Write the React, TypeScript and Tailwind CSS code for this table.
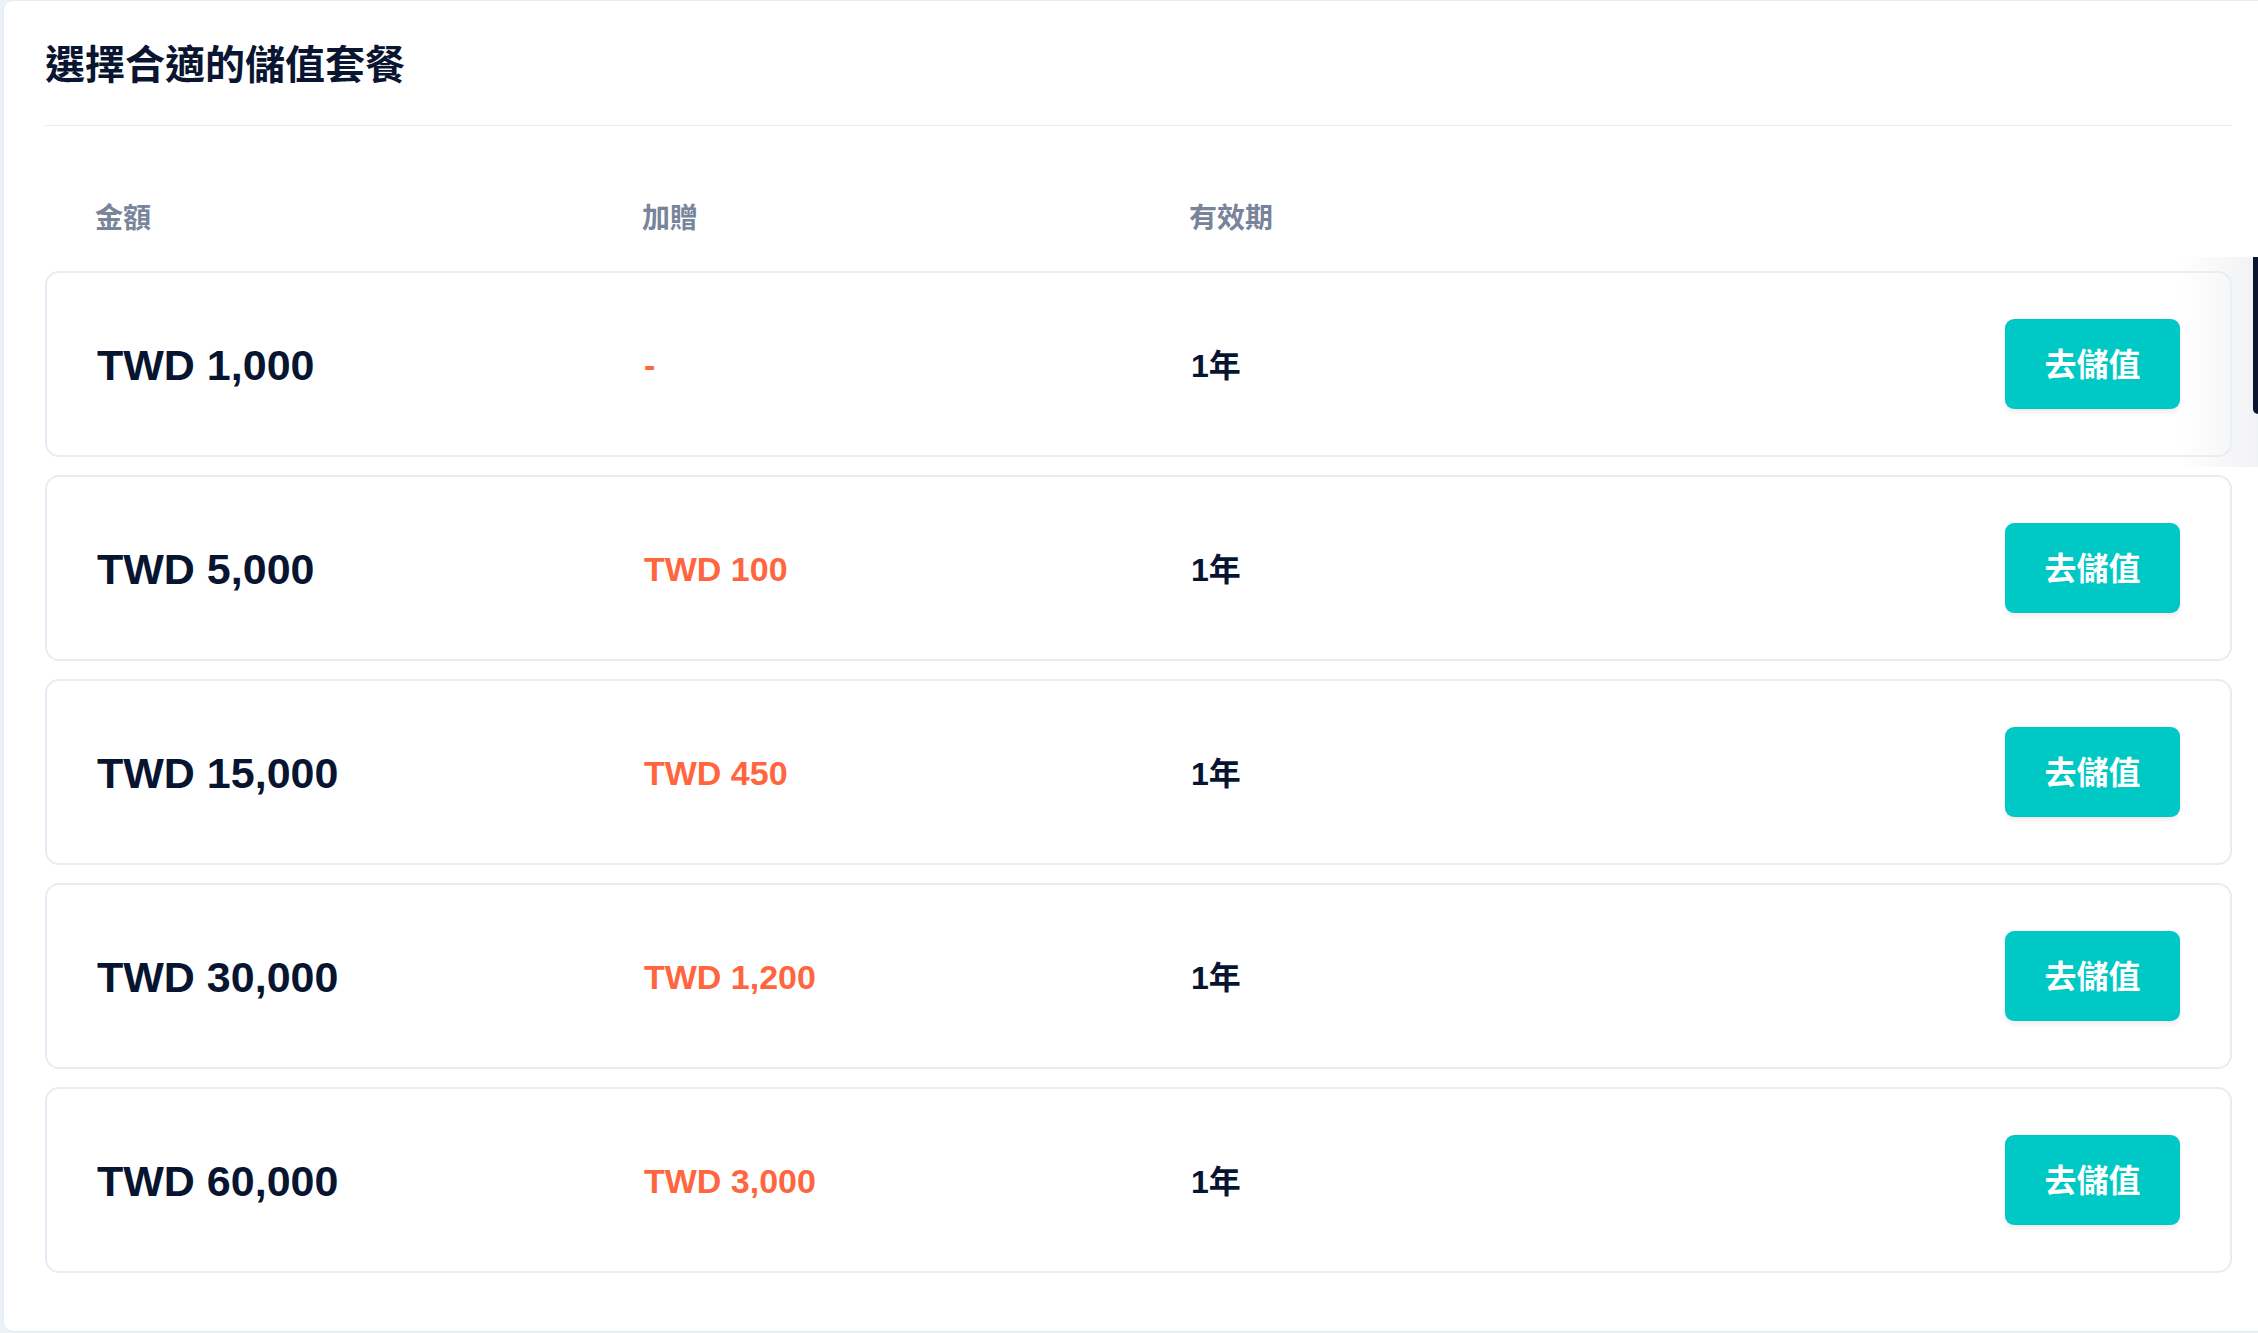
import React from 'react';

const plans = [
  { amount: 'TWD 1,000', bonus: '-', validity: '1年' },
  { amount: 'TWD 5,000', bonus: 'TWD 100', validity: '1年' },
  { amount: 'TWD 15,000', bonus: 'TWD 450', validity: '1年' },
  { amount: 'TWD 30,000', bonus: 'TWD 1,200', validity: '1年' },
  { amount: 'TWD 60,000', bonus: 'TWD 3,000', validity: '1年' },
];

export default function App() {
  return (
    <div className="relative min-h-screen overflow-hidden bg-[#edf2f8] font-['Liberation_Sans','Noto_Sans_CJK_TC',sans-serif]">
      {/* Main card - runs off the right edge */}
      <div className="ml-[3px] w-[2280px] h-[1332px] bg-white border border-[#e5ecf4] rounded-l-[10px] pl-[41px]">
        <div className="w-[2187px]">
          <div className="pt-[36px] pb-[32px] border-b border-[#e9eef4]">
            <h1 className="text-[40px] leading-[56px] font-bold text-[#0a1631]">選擇合適的儲值套餐</h1>
          </div>

          {/* Column headers */}
          <div className="flex pt-[73px] pb-[32px] pl-[50px] text-[28px] leading-[40px] font-semibold text-[#77849a]">
            <div className="w-[547px]">金額</div>
            <div className="w-[547px]">加贈</div>
            <div className="w-[547px]">有效期</div>
          </div>

          <div className="flex flex-col gap-[18px]">
            {plans.map((plan) => (
              <div
                key={plan.amount}
                className="flex items-center h-[186px] pl-[50px] pr-[50px] border-2 border-[#e6edf5] rounded-[14px] bg-white"
              >
                <div className="w-[547px] pt-[3px] text-[43px] font-bold text-[#081530]">{plan.amount}</div>
                <div className="w-[547px] pt-[3px] text-[34px] font-semibold text-[#ff6640]">{plan.bonus}</div>
                <div className="w-[547px] pt-[3px] text-[32px] font-bold text-[#081530]">{plan.validity}</div>
                <button className="ml-auto w-[175px] h-[90px] pt-[2px] rounded-[9px] bg-[#00c8c4] text-white text-[32px] font-bold shadow-[0_4px_4px_rgba(0,0,0,0.06)]">
                  去儲值
                </button>
              </div>
            ))}
          </div>
        </div>
      </div>

      {/* Floating side tab peeking from the right edge */}
      <div className="absolute top-[257px] right-0 w-[80px] h-[210px] bg-gradient-to-r from-transparent to-[#eeeff1]/80 pointer-events-none" />
      <div className="absolute top-[257px] right-0 w-[5px] h-[157px] bg-[#0b1530] rounded-bl-[6px]" />
    </div>
  );
}
